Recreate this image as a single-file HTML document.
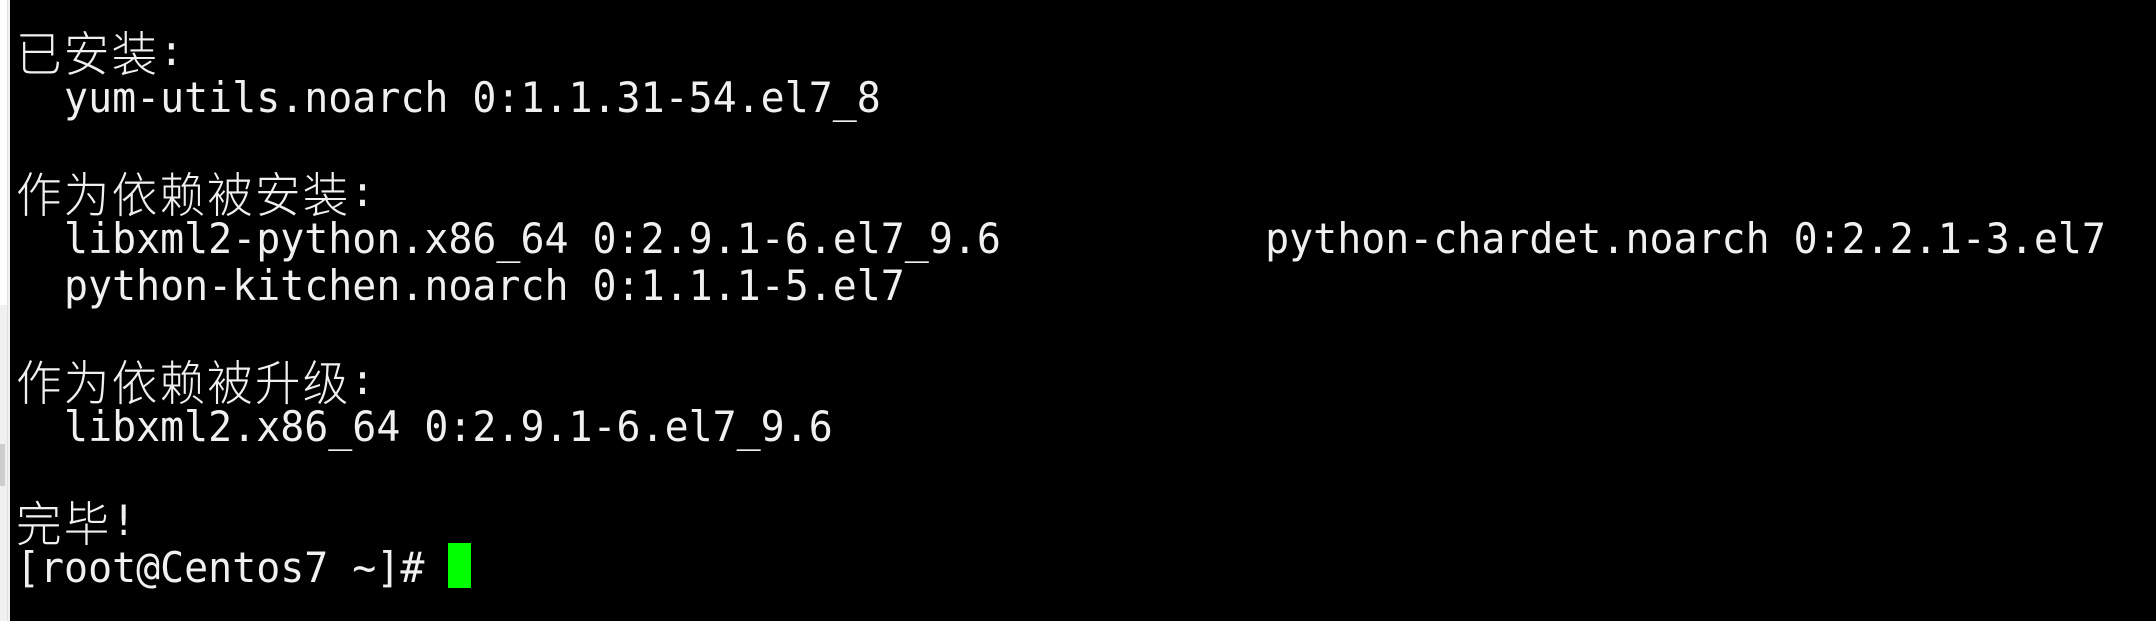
<!DOCTYPE html>
<html><head><meta charset="utf-8"><style>
html,body{margin:0;padding:0;background:#000;}
body{width:2156px;height:621px;overflow:hidden;position:relative;}
.strip{position:absolute;left:0;top:0;width:10px;height:621px;background:#f0f0f0;}
.strip .w{position:absolute;left:0;top:0;width:7px;height:305px;background:#fff;}
.strip .b{position:absolute;left:7px;top:0;width:1px;height:621px;background:#e0e0e0;}
.strip .g{position:absolute;left:0;top:444px;width:5px;height:42px;background:#cdcdcd;}
pre{position:absolute;left:16px;top:27px;margin:0;font-family:"DejaVu Sans Mono","Liberation Mono","Noto Sans CJK SC",monospace;font-size:42px;line-height:47px;color:#f0f0f0;white-space:pre;transform:scaleX(0.95);transform-origin:0 0;}
.c{display:inline-block;width:50.3px;font-family:"Noto Sans CJK SC","WenQuanYi Zen Hei",sans-serif;font-weight:300;font-size:48px;text-align:left;vertical-align:top;line-height:47px;}
.cur{position:absolute;left:448px;top:543px;width:23px;height:45px;background:#00ff00;}
</style></head><body>
<div class="strip"><div class="w"></div><div class="b"></div><div class="g"></div></div>
<pre><span class="c">已</span><span class="c">安</span><span class="c">装</span>:
  yum-utils.noarch 0:1.1.31-54.el7_8

<span class="c">作</span><span class="c">为</span><span class="c">依</span><span class="c">赖</span><span class="c">被</span><span class="c">安</span><span class="c">装</span>:
  libxml2-python.x86_64 0:2.9.1-6.el7_9.6           python-chardet.noarch 0:2.2.1-3.el7
  python-kitchen.noarch 0:1.1.1-5.el7

<span class="c">作</span><span class="c">为</span><span class="c">依</span><span class="c">赖</span><span class="c">被</span><span class="c">升</span><span class="c">级</span>:
  libxml2.x86_64 0:2.9.1-6.el7_9.6

<span class="c">完</span><span class="c">毕</span>!
[root@Centos7 ~]# </pre>
<div class="cur"></div>
</body></html>
